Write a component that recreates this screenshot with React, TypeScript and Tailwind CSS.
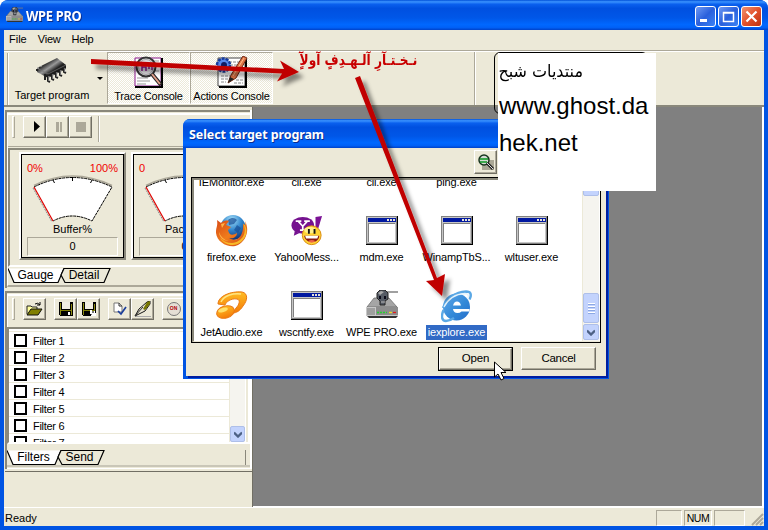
import type { ReactNode } from "react";

const RAISED = "border border-t-white border-l-white border-r-[#716f64] border-b-[#716f64] shadow-[inset_-1px_-1px_0_#aca899]";

/* ---------- icons ---------- */

function Drive({ size = 32 }: { size?: number }) {
  return (
    <svg width={size} height={size} viewBox="0 0 32 32">
      <path d="M20 2h12" stroke="#808080" strokeWidth="1.5" />
      <path d="M8 8L1 17h30L23 8z" fill="#a5a5a5" stroke="#666" strokeWidth=".7" />
      <path d="M0 17h32v9H0z" fill="#c8c8c8" />
      <path d="M10 17h22v8H10z" fill="#8d8d8d" />
      <path d="M1 26h31l-2 2H3z" fill="#333" />
      <path d="M2 18v7M4 18v7M6 18v7M8 18v7" stroke="#777" />
      <path d="M11 22.5h10" stroke="#24d32c" strokeWidth="1.3" strokeDasharray="2 1" />
      <path d="M23 22.5h3" stroke="#eee21f" strokeWidth="1.3" />
      <path d="M27 22.5h3" stroke="#e31b1b" strokeWidth="1.3" />
      <path d="M11 3l3-3h5l3 3v6l-3 2v4h-5v-4l-3-3z" fill="#555b65" stroke="#252525" />
      <path d="M12 3l3-2 3 1-4 3z" fill="#aaa" />
      <path d="M13 6h2v3h-2zM18 6h2v3h-2z" fill="#0a0a18" />
      <path d="M15 12h4" stroke="#bbb" />
    </svg>
  );
}

function Chip() {
  return (
    <svg width="32" height="28" viewBox="0 0 32 28">
      <defs>
        <linearGradient id="chip" x1="0" y1="0" x2="1" y2="1">
          <stop offset="0" stopColor="#000" />
          <stop offset=".3" stopColor="#333" />
          <stop offset=".45" stopColor="#999" />
          <stop offset=".6" stopColor="#222" />
          <stop offset="1" stopColor="#000" />
        </linearGradient>
      </defs>
      <path d="M1 11L21 1l9 7v4L12 21 1 15z" fill="url(#chip)" />
      <path d="M1 11l11 6 18-9" stroke="#777" strokeWidth=".7" fill="none" />
      <path d="M12 18v6l2 1M16 17v5l2 1M20 15v5l2 1M24 13v5l2 1M28 10v5l2 1M1 12v2M9 17v6" stroke="#222" strokeWidth="2" fill="none" />
      <path d="M13 19v5M17 17v5M21 15v5M25 13v5M29 11v4M2 10v2M5 8v2" stroke="#ddd" strokeWidth=".8" />
    </svg>
  );
}

function TraceIcon() {
  return (
    <svg width="32" height="33" viewBox="0 0 32 33">
      <path d="M2 2h26v28H2z" fill="#fff" stroke="#8a168a" strokeWidth="1" />
      <path d="M29 2v29H2" stroke="#000" strokeWidth="2" fill="none" />
      <path d="M4 22h11M4 25h13M4 28h9M19 5h7M22 9h4M23 15h3" stroke="#999" />
      <circle cx="13" cy="11" r="9.5" fill="#dedbe0" stroke="#333" strokeWidth="2" />
      <circle cx="13" cy="11" r="7.5" fill="none" stroke="#aaa" />
      <path d="M9 7v8M9 11h4v4M16 7v6M14 9h5v5" stroke="#8a168a" strokeWidth="1.5" fill="none" />
      <path d="M19 18l9 11" stroke="#222" strokeWidth="4" />
      <path d="M19 18l8 10" stroke="#e2a08a" strokeWidth="2" />
    </svg>
  );
}

function ActionsIcon() {
  return (
    <svg width="33" height="33" viewBox="0 0 33 33">
      <path d="M3 2h27v28H3z" fill="#fff" stroke="#444" />
      <path d="M31 3v28H4" stroke="#000" strokeWidth="2" fill="none" />
      <path d="M14 6h10M15 9h8M6 20h9M6 23h7M6 26h5M21 24h7M19 27h9" stroke="#888" strokeDasharray="3 1" />
      <circle cx="8.500" cy="9" r="6.500" fill="#5688ed" stroke="#173b9c" strokeWidth="2.500" strokeDasharray="3 1" />
      <circle cx="9" cy="9" r="3" fill="#101b62" />
      <path d="M28 0l4 2-11 20-8 5 3-8z" fill="#df7549" stroke="#6e2912" />
      <path d="M29 2L18 20" stroke="#ffc08c" />
      <path d="M13 27l2-6 4 2z" fill="#222" />
    </svg>
  );
}

function WindowIcon() {
  return (
    <svg width="32" height="32" viewBox="0 0 32 32" shapeRendering="crispEdges">
      <path d="M0 1h32v29H0z" fill="#000" />
      <path d="M0 1h31v28H0z" fill="#808080" />
      <path d="M1 2h29v26H1z" fill="#c6c6c6" />
      <path d="M2 3h28v4H2z" fill="#0018a0" />
      <path d="M21 4h2v2h-2zM24 4h2v2h-2zM27 4h2v2h-2z" fill="#e6e2d6" />
      <path d="M2 8h27v19H2z" fill="#808080" />
      <path d="M3 9h26v18H3z" fill="#fff" />
    </svg>
  );
}

function Firefox() {
  return (
    <svg width="32" height="32" viewBox="0 0 32 32">
      <defs>
        <radialGradient id="globe" cx=".45" cy=".2" r=".8">
          <stop offset="0" stopColor="#a6e1fa" />
          <stop offset=".5" stopColor="#3185cc" />
          <stop offset="1" stopColor="#12316f" />
        </radialGradient>
        <linearGradient id="fox" x1="0" y1="0" x2="1" y2="1">
          <stop offset="0" stopColor="#d84a16" />
          <stop offset=".5" stopColor="#f07c1c" />
          <stop offset="1" stopColor="#cf4416" />
        </linearGradient>
      </defs>
      <circle cx="17" cy="12.500" r="12.500" fill="url(#globe)" />
      <path d="M12 5c4-3 7-2 9 0l-3 4-5 1zM21 10l4 3-3 5-4-3z" fill="#184d94" opacity=".7" />
      <path d="M1 5l4 3c2-2 5-3 8-2l-3 4 5 2-3 3c1 5 4 6 9 3 0 4-4 6-8 5 8 5 15-2 14-14 2 2 3 0 2-3 5 9 1 20-7 24S1 28 0 18C0 12 2 11 1 5z" fill="url(#fox)" />
      <path d="M27 8c5 10-1 19-11 20-5 0-9-2-12-5 5 8 15 9 21 4 7-6 7-14 2-19z" fill="#f7b928" />
      <path d="M5 9l4-1-3 5zM3 17c2 5 5 8 10 9-6 0-10-4-10-9z" fill="#ffb246" />
    </svg>
  );
}

function Yahoo() {
  return (
    <svg width="32" height="32" viewBox="0 0 34 32">
      <path d="M26 1l7-1-4 13h-3z" fill="#7b1295" />
      <ellipse cx="12.500" cy="10" rx="12" ry="9" fill="#75128f" />
      <path d="M4 16l-1 5 6-3z" fill="#75128f" />
      <path d="M5 5.500h6M14 5.500h6M8 6l4.500 5v4M17 6l-4.500 5M9.500 15h6" stroke="#fff" strokeWidth="1.800" fill="none" />
      <circle cx="22" cy="20.500" r="10" fill="#ffd335" stroke="#d88a11" />
      <ellipse cx="20" cy="15" rx="6" ry="3.500" fill="#fff08a" />
      <path d="M19 14v5M25 14v5" stroke="#151515" strokeWidth="2" />
      <path d="M14 21h16c0 9-15 9-16 0z" fill="#8c1e13" />
      <path d="M15 21h14l-1 3H16z" fill="#fff" />
      <path d="M18 27q4-3 8 0-4 3-8 0z" fill="#ee6549" />
    </svg>
  );
}

function JetAudio() {
  return (
    <svg width="32" height="32" viewBox="0 0 32 32">
      <defs>
        <linearGradient id="jet" x1="0" y1="0" x2="0" y2="1">
          <stop offset="0" stopColor="#ffbd24" />
          <stop offset="1" stopColor="#f47b08" />
        </linearGradient>
      </defs>
      <path d="M2 14C2 6 15 1 26 2c6 1 6 8 1 14-3 5-7 7-10 7l3-5c3-3 5-8 1-9-6-1-11 3-12 6z" fill="url(#jet)" stroke="#ea7914" />
      <path d="M5 12C8 5 18 3 25 4" stroke="#ffe482" strokeWidth="1.500" fill="none" />
      <ellipse cx="9.500" cy="22" rx="9" ry="6" transform="rotate(-18 9.500 22)" fill="url(#jet)" stroke="#ea7914" />
      <ellipse cx="7" cy="20" rx="5" ry="2" transform="rotate(-18 7 20)" fill="#ffe06a" />
    </svg>
  );
}

function Explorer() {
  return (
    <svg width="32" height="33" viewBox="0 0 32 33">
      <defs>
        <linearGradient id="ie" x1="0" y1="0" x2="1" y2="1">
          <stop offset="0" stopColor="#62a9ea" />
          <stop offset=".55" stopColor="#348ad8" />
          <stop offset="1" stopColor="#236dca" />
        </linearGradient>
      </defs>
      <circle cx="15.500" cy="17" r="13.500" fill="url(#ie)" />
      <path d="M12 15.500q1-4 4-4t4 4z" fill="#fff" />
      <path d="M12 19h16.500v2.500H20.500q-1.500 1.500-4 1.500-4 0-4.500-4z" fill="#fff" />
      <path d="M2 18C5 10 14 2 25 1.500c5 0 6 3 3.500 8" stroke="#5ba8e5" strokeWidth="2.400" fill="none" />
      <path d="M2.500 20C0 26 .5 31 5 31c3 0 5-1 8-3" stroke="#5ba8e5" strokeWidth="2.400" fill="none" />
      <path d="M3 17C7 9 15 4 24 3.500c3 0 4 2 3 5" stroke="#e4f3fc" strokeWidth="1.300" fill="none" />
    </svg>
  );
}

function FindIcon() {
  return (
    <svg width="18" height="17" viewBox="0 0 18 17">
      <path d="M5 6h12v10H5z" fill="#aaa796" />
      <circle cx="7" cy="6" r="5" fill="#d6dcd6" stroke="#17351e" strokeWidth="1.500" />
      <path d="M3 5h8M3 8h7" stroke="#0b9822" strokeWidth="1.500" />
      <path d="M10 9l6 6" stroke="#222" strokeWidth="3" />
      <path d="M10 9l6 6" stroke="#ddd" />
    </svg>
  );
}

function OpenIcon() {
  return (
    <svg width="17" height="14" viewBox="0 0 17 14">
      <path d="M1 12V4h4l1 1h5v3" fill="#ffff9c" stroke="#222" />
      <path d="M1 13l4-6h11l-4 6z" fill="#807f00" stroke="#111" />
      <path d="M9 2q3-2 5 1m0-3v3h-3" fill="none" stroke="#000" />
    </svg>
  );
}

function SaveIcon({ as = false }: { as?: boolean }) {
  return (
    <svg width="14" height="14" viewBox="0 0 14 14" shapeRendering="crispEdges">
      <path d="M0 0h14v14H1L0 13z" fill="#000" />
      <path d="M1 1h1v12H1zM12 2h1v11h-1z" fill="#8c8a12" />
      <path d="M3 0h8v7H3z" fill="#f1eee3" />
      <path d="M2 8h10v1H2z" fill="#7e7c00" />
      <path d="M9 10h2v3H9z" fill="#fff" />
      {as && <path d="M8 8h2v1h3v2h1v3H9v-2H8z" fill="#fff" />}
      {as && <path d="M10 9h2v2h-2zM9 12h1v1H9z" fill="#777" />}
    </svg>
  );
}

function CheckDoc() {
  return (
    <svg width="14" height="14" viewBox="0 0 14 14">
      <path d="M1 1h5l3 3v6H1z" fill="#fff" stroke="#777" />
      <path d="M6 1v3h3" stroke="#333" fill="none" />
      <path d="M5 9l3 3 5-7" stroke="#193d9b" strokeWidth="1.700" fill="none" />
    </svg>
  );
}

function Pen() {
  return (
    <svg width="18" height="16" viewBox="0 0 18 16">
      <path d="M1 15.500h16" stroke="#aaa" />
      <path d="M1 15L5 8l8-7 3-1v3l-5 7-6 3z" fill="#e9e5d3" stroke="#161616" />
      <path d="M13 1l3-1v3l-5 6-2-1z" fill="#777600" />
      <path d="M1 15l8-9" stroke="#333" />
    </svg>
  );
}

function Chevron() {
  return (
    <svg width="8" height="7" viewBox="0 0 8 7">
      <path d="M0 1.500l4 4 4-4" fill="none" stroke="#4d6185" strokeWidth="2.300" />
    </svg>
  );
}

/* ---------- widgets ---------- */

function ToolButton({ children }: { children?: ReactNode }) {
  return <div className={`flex h-[22px] w-[23px] shrink-0 items-center justify-center ${RAISED}`}>{children}</div>;
}

function Grip() {
  return <div className="h-[22px] w-[3px] shrink-0 border border-t-white border-r-[#aca899] border-b-[#aca899] border-l-white" />;
}

function Gauge({ label, low, high }: { label: string; low: string; high: string }) {
  return (
    <div className="h-[108px] w-[107px] shrink-0 border-2 border-t-white border-l-white border-r-[#8a887b] border-b-[#8a887b]">
      <div className="flex h-[104px] w-[103px] flex-col border border-black px-[5px] pt-[7px] text-[11px]">
        <div className="flex h-[13px] justify-between leading-[13px] text-[#f00000]">
          <span>{low}</span>
          <span>{high}</span>
        </div>
        <svg width="91" height="48" viewBox="0 0 91 48" className="shrink-0">
          <path d="M7 12Q45-7 85 12L65 46Q45 35 26 46z" fill="#fff" />
          <path d="M7 10.500Q45-8.500 85 10.500" fill="none" stroke="#aca899" strokeWidth="1.500" />
          <path d="M7 12Q45-7 85 12L65 46Q45 36 26 46" fill="none" stroke="#000" strokeDasharray="3 .7" />
          <path d="M45.500 2v4M26 5l1.500 3M65 5l-1.500 3" stroke="#000" />
          <path d="M6 13l19 34" stroke="#888" strokeDasharray="2 1" />
          <path d="M7 12l19 34" stroke="#e00000" strokeWidth="1.200" />
        </svg>
        <div className="h-[13px] text-center leading-[13px]">{label}</div>
        <div className="mt-[1px] flex h-[19px] items-center justify-center border border-t-[#aca899] border-l-[#aca899] border-r-white border-b-white">0</div>
      </div>
    </div>
  );
}

function Tabs({ first, second, a, b }: { first: string; second: string; a: number; b: number }) {
  return (
    <div className="relative flex h-4 text-[12px] leading-[15px]">
      <svg width={a + b + 8} height="16" className="absolute left-0 top-0">
        <path d={`M0 .5L6 14.500H${a - 5}L${a + 1} .5`} fill="#fff" stroke="#000" strokeWidth="1.200" />
        <path d={`M${a - 2} 7l4 7.500H${a + b - 6}L${a + b} .5H${a + 1}z`} fill="#ece9d8" stroke="#000" strokeWidth="1.200" />
      </svg>
      <span className="relative text-center" style={{ width: a }}>{first}</span>
      <span className="relative text-center" style={{ width: b - 5 }}>{second}</span>
    </div>
  );
}

function FileItem({ icon, name, selected = false }: { icon?: ReactNode; name: string; selected?: boolean }) {
  return (
    <div className="flex h-[75px] w-[75px] flex-col items-center">
      <div className="flex h-[35px] w-full items-start justify-center">{icon}</div>
      <span className={`flex h-[15px] items-center whitespace-nowrap px-[2px] text-[11px] tracking-[-0.15px] ${selected ? "bg-[#316ac5] text-white" : ""}`}>{name}</span>
    </div>
  );
}

function Caption({ kind }: { kind: "min" | "max" | "close" }) {
  return (
    <div className={`flex size-[21px] items-center justify-center rounded-[3px] border border-white ${kind === "close" ? "bg-gradient-to-br from-[#f0916f] via-[#e2512b] to-[#bd3212]" : "bg-gradient-to-br from-[#6f99f3] via-[#2a60dc] to-[#3c83f5]"}`}>
      <svg width="15" height="15" viewBox="0 0 15 15">
        {kind === "min" && <path d="M2 10h7v3H2z" fill="#fff" />}
        {kind === "max" && <path d="M2.500 3.500h10v9h-10zM2 4h11" fill="none" stroke="#fff" strokeWidth="1.500" />}
        {kind === "close" && <path d="M2.500 2.500l10 10M12.500 2.500l-10 10" stroke="#fff" strokeWidth="2.200" />}
      </svg>
    </div>
  );
}

const TITLE_BG = "bg-[linear-gradient(180deg,#0050d8_0%,#3b93ff_6%,#0a60ee_14%,#0050e0_28%,#0057e8_60%,#0068ff_82%,#0060f6_92%,#0042c8_100%)]";

/* ---------- panels ---------- */

function GaugeDock() {
  return (
    <div className="flex h-[178px] flex-col border-t-2 border-l-2 border-t-[#8a887b] border-l-[#8a887b] pt-[1px]">
      <div className="flex h-[174px] flex-col border-t-2 border-l border-white border-b-2 border-b-[#aca899]">
        <div className="flex h-[32px] shrink-0 items-start border-b border-[#aca899] pl-[4px] pt-[1px]">
          <Grip />
          <div className="ml-[8px] flex">
            <ToolButton><svg width="12" height="12"><path d="M5 0v11l6-5.500z" /></svg></ToolButton>
            <ToolButton><svg width="12" height="12"><path d="M4 1h3v10H4zM8 1h2v10H8z" fill="#aca899" /></svg></ToolButton>
            <ToolButton><svg width="12" height="12"><path d="M1 1h10v10H1z" fill="#aca899" /></svg></ToolButton>
          </div>
          <div className="ml-[6px] h-[26px] w-[2px] border-l border-[#aca899] bg-white" />
        </div>
        <div className="mt-[1px] flex h-[119px] shrink-0 gap-[5px] overflow-hidden border-t-2 border-l-2 border-[#8a887b] border-b-2 border-b-white pl-[9px] pt-[2px]">
          <Gauge label="Buffer%" low="0%" high="100%" />
          <Gauge label="Packets" low="0" high="100" />
        </div>
        <div className="pt-[1px]"><Tabs first="Gauge" second="Detail" a={55} b={47} /></div>
      </div>
    </div>
  );
}

function FilterDock() {
  return (
    <div className="mt-[3px] flex h-[178px] flex-col border-t-2 border-l-2 border-t-[#8a887b] border-l-[#8a887b] pt-[1px]">
      <div className="flex h-[33px] shrink-0 items-start border-t-2 border-l border-white pl-[4px] pt-[2px]">
        <Grip />
        <div className="ml-[8px] flex gap-[8px]">
          <ToolButton><OpenIcon /></ToolButton>
          <div className="flex"><ToolButton><SaveIcon /></ToolButton><ToolButton><SaveIcon as /></ToolButton></div>
          <div className="flex"><ToolButton><CheckDoc /></ToolButton><ToolButton><Pen /></ToolButton></div>
          <ToolButton>
            <div className="flex size-[14px] items-center justify-center rounded-full border border-[#777] bg-[#e5dfd5] text-[5px] font-bold text-[#b00000]">ON</div>
          </ToolButton>
        </div>
      </div>
      <div className="flex h-[117px] shrink-0 border-t-2 border-l-2 border-[#8a887b] border-b-2 border-b-white bg-white">
        <div className="h-[113px] w-[220px] overflow-hidden pt-[2px]">
          {[1, 2, 3, 4, 5, 6, 7].map((n) => (
            <div key={n} className="flex h-[17px] items-center border-t border-[#ece9d8] pl-[5px] pt-[1px]">
              <span className="size-[13px] border-2 border-black bg-white" />
              <span className="ml-[6px] text-[11px] leading-[14px] tracking-[-0.3px]">Filter {n}</span>
            </div>
          ))}
        </div>
        <div className="flex h-[113px] w-[16px] items-end border-l border-[#ece9d8] bg-[#f5f4ef]">
          <div className="flex h-[16px] w-[15px] items-center justify-center rounded-[2px] border border-[#aebfe9] bg-[#c3d3fd]"><Chevron /></div>
        </div>
        <div className="w-[3px] border-l border-white bg-[#ece9d8]" />
      </div>
      <div className="mt-[6px] flex h-[17px] justify-between border-b-2 border-b-[#c9c6b7] pr-[3px]">
        <Tabs first="Filters" second="Send" a={53} b={44} />
        <div className="w-[2px] border-l border-[#8a887b]" />
      </div>
      <div className="mt-[1px] h-[1px] bg-white" />
    </div>
  );
}

function Dialog() {
  return (
    <div className="absolute left-[183px] top-[119px] flex h-[260px] w-[426px] flex-col rounded-t-[7px] bg-[#0054e3] text-black">
      <div className={`flex h-[29px] items-center rounded-t-[7px] pl-[6px] pt-[3px] text-white [text-shadow:1px_1px_#0a2f91] ${TITLE_BG}`}>
        <span className="text-[12.500px] font-bold tracking-[-0.1px] [font-family:'Noto_Sans',sans-serif]">Select target program</span>
      </div>
      <div className="mx-[3px] mb-[3px] flex flex-1 flex-col bg-[#ece9d8] px-[5px] shadow-[2px_2px_0_#001ea0]">
        <div className="flex h-[29px] items-start pl-[283px] pt-[2px]">
          <div className={`flex h-[24px] w-[23px] items-center justify-center ${RAISED}`}><FindIcon /></div>
        </div>
        <div className="flex h-[166px] w-[410px] border border-black">
          <div className="flex w-full border-t-2 border-l-2 border-[#8a887b] border-b border-b-[#ece9d8] bg-white">
            <div className="h-[161px] w-[388px] overflow-hidden">
              <div className="-mt-[40px] flex flex-wrap content-start">
                <FileItem name="IEMonitor.exe" />
                <FileItem name="cli.exe" />
                <FileItem name="cli.exe" />
                <FileItem name="ping.exe" />
                <div className="w-[75px]" />
                <FileItem icon={<Firefox />} name="firefox.exe" />
                <FileItem icon={<Yahoo />} name="YahooMess..." />
                <FileItem icon={<WindowIcon />} name="mdm.exe" />
                <FileItem icon={<WindowIcon />} name="WinampTbS..." />
                <FileItem icon={<WindowIcon />} name="wltuser.exe" />
                <FileItem icon={<JetAudio />} name="JetAudio.exe" />
                <FileItem icon={<WindowIcon />} name="wscntfy.exe" />
                <FileItem icon={<Drive />} name="WPE PRO.exe" />
                <FileItem icon={<Explorer />} name="iexplore.exe" selected />
              </div>
            </div>
            <div className="flex h-full w-[17px] flex-col border-l border-[#ece9d8] bg-[#f5f4ef]">
              <div className="h-[16px] rounded-[2px] border border-[#aebfe9] bg-[#c3d3fd]" />
              <div className="mt-[97px] flex h-[30px] flex-col items-center justify-center gap-[1px] rounded-[2px] border border-[#aebfe9] bg-[#c3d3fd]">
                {[0, 1, 2, 3].map((n) => <i key={n} className="h-[2px] w-[7px] shrink-0 border-b border-[#8ca8e4] bg-white" />)}
              </div>
              <div className="mt-[1px] flex h-[16px] items-center justify-center rounded-[2px] border border-[#aebfe9] bg-[#c3d3fd]"><Chevron /></div>
            </div>
          </div>
        </div>
        <div className="ml-[247px] mt-[4px] flex gap-[8px] text-[11.500px]">
          <div className="h-[24px] w-[75px] border border-black"><div className={`flex h-full items-center justify-center tracking-[-0.2px] ${RAISED}`}>Open</div></div>
          <div className={`flex h-[23px] w-[75px] items-center justify-center tracking-[-0.3px] ${RAISED}`}>Cancel</div>
        </div>
      </div>
    </div>
  );
}

export default function App() {
  const dither = "bg-[repeating-conic-gradient(#fff_0_25%,#ece9d8_0_50%)] bg-[size:2px_2px]";
  return (
    <div className="relative flex h-[530px] w-[768px] flex-col overflow-hidden rounded-t-[8px] bg-[#0054e3] text-black [font-family:'Liberation_Sans',Arial,sans-serif]">
      <header className={`flex h-[30px] shrink-0 items-center rounded-t-[8px] pl-[6px] pr-[6px] ${TITLE_BG}`}>
        <div className="flex size-[17px]"><Drive size={17} /></div>
        <span className="ml-[3px] origin-left scale-x-95 pt-[3px] text-[13.500px] font-bold tracking-[-0.3px] text-white [font-family:'Noto_Sans',sans-serif] [text-shadow:1px_1px_#0a2f91]">WPE PRO</span>
        <div className="ml-auto flex gap-[2px] pt-[3px]"><Caption kind="min" /><Caption kind="max" /><Caption kind="close" /></div>
      </header>

      <div className="mx-[4px] flex h-[496px] flex-col bg-[#ece9d8]">
        <nav className="flex h-[20px] shrink-0 gap-[11px] pl-[5px] text-[11px] leading-[19px]">
          <span>File</span><span className="tracking-[-0.2px]">View</span><span className="tracking-[-0.2px]">Help</span>
        </nav>

        <div className="flex h-[57px] shrink-0 border-t border-b-2 border-t-[#aca899] border-b-[#8a887b] text-[11px] shadow-[inset_0_1px_0_white]">
          <div className="mt-[2px] ml-[3px] w-[2px] border-l border-[#aca899] bg-white" />
          <div className="flex w-[98px] pt-[6px]">
            <div className="flex w-[86px] flex-col items-center">
              <div className="h-[32px]"><Chip /></div>
              <span className="whitespace-nowrap leading-[13px]">Target program</span>
            </div>
            <svg width="6" height="4" className="ml-[2px] mt-[20px]"><path d="M0 0h6L3 3z" /></svg>
          </div>
          <div className={`mt-[1px] flex h-[52px] w-[83px] flex-col items-center border border-t-[#aca899] border-l-[#aca899] border-r-white border-b-white pt-[3px] ${dither}`}>
            <div className="h-[34px]"><TraceIcon /></div>
            <span className="whitespace-nowrap leading-[13px] tracking-[-0.2px]">Trace Console</span>
          </div>
          <div className={`mt-[1px] flex h-[52px] w-[83px] flex-col items-center border border-t-[#aca899] border-l-[#aca899] border-r-white border-b-white pt-[3px] ${dither}`}>
            <div className="h-[34px]"><ActionsIcon /></div>
            <span className="whitespace-nowrap leading-[13px] tracking-[-0.2px]">Actions Console</span>
          </div>
          <div className="ml-[201px] mt-[1px] w-[2px] border-l border-[#aca899] bg-white" />
        </div>

        <main className="flex h-[400px] shrink-0">
          <aside className="w-[249px] border-r border-[#716f64] pt-[3px] pl-[1px]">
            <div className="border-r-2 border-white">
              <GaugeDock />
              <FilterDock />
            </div>
            <div className="mt-[2px] border-t border-[#716f64]" />
          </aside>
          <section className="flex-1 border-b border-r-2 border-white bg-[#808080]" />
        </main>

        <footer className="flex h-[19px] items-start border-t border-white pl-[1px] text-[11px]">
          <span className="pt-[3px] leading-[14px]">Ready</span>
          <div className="ml-auto flex gap-[2px] pt-[2px] leading-[15px]">
            <span className="h-[16px] w-[26px] border border-t-[#aca899] border-l-[#aca899] border-r-white border-b-white" />
            <span className="h-[16px] w-[28px] border border-t-[#aca899] border-l-[#aca899] border-r-white border-b-white text-center text-[10.500px] tracking-[-0.5px]">NUM</span>
            <span className="h-[16px] w-[31px] border border-t-[#aca899] border-l-[#aca899] border-r-white border-b-white" />
          </div>
          <svg width="19" height="18"><path d="M7 17L18 6M11 17l7-7M15 17l3-3" stroke="#aca899" strokeWidth="2" /></svg>
        </footer>
      </div>

      <Dialog />

      {/* Forum watermark and tutorial annotations lie over both windows. */}
      <div className="absolute left-[494px] top-[52px] h-[62px] w-[154px] rounded-[6px] border border-black" />
      <div className="absolute left-[498px] top-[53px] h-[138px] w-[158px] bg-white">
        <div dir="rtl" className="h-[34px] pr-[73px] pt-[6px] whitespace-nowrap text-[17px] leading-[25px] [font-family:'DejaVu_Sans',sans-serif]"><span className="inline-block origin-right scale-x-[0.94]">منتديات شبح</span></div>
        <div className="pl-[1px] text-[24px] leading-[37px]">www.ghost.da<br />hek.net</div>
      </div>
      <div dir="rtl" className="absolute left-[299px] top-[49px] w-[118px] whitespace-nowrap text-[15px] font-bold leading-[22px] text-[#c80000] [font-family:'DejaVu_Sans',sans-serif]"><span className="inline-block origin-right scale-x-[0.81]">نـخـتـآرِ آلـهـدِفٍ آولآٍ</span></div>
      <svg width="768" height="530" viewBox="0 0 768 530" className="pointer-events-none absolute left-0 top-0">
        <defs>
          <filter id="arrowShadow" x="-20%" y="-50%" width="150%" height="250%">
            <feDropShadow dx="5" dy="5" stdDeviation="2" floodColor="#000" floodOpacity=".45" />
          </filter>
        </defs>
        <g fill="#c00000" filter="url(#arrowShadow)">
          <path d="M91 59L284 69l-4-8.500 19 11.500-22 9.500 5-8L91 64z" />
          <path d="M360 76l77 202 8-4-3 22-16-15 8-1-79-202z" />
        </g>
        <path d="M494.500 362v15l3.500-3 3 6 3-1.500-3-6h5z" fill="#fff" stroke="#000" />
      </svg>
    </div>
  );
}
